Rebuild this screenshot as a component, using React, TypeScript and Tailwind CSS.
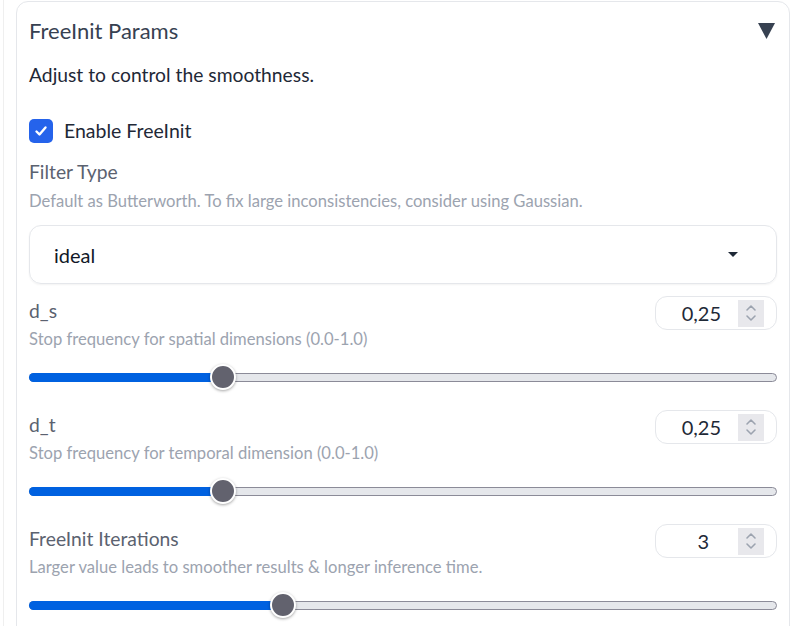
import React from 'react';

const font = { fontFamily: 'Lato, "Noto Sans", sans-serif' };

const NumberBox: React.FC<{ value: string; textPad?: string }> = ({ value, textPad = 'pr-[17px]' }) => (
    <div className="flex items-center h-[34px] w-[122px] rounded-xl border border-[#e5e7eb] bg-white pr-[12px]">
        <span className={`flex-1 text-right text-[20px] text-[#1f2937] ${textPad}`}>{value}</span>
        <div className="flex flex-col items-center justify-center w-[26px] h-[27px] bg-[#e8e8ec]">
            <svg width="12" height="20" viewBox="0 0 12 20" fill="none" stroke="#9ca3af" strokeWidth="1.6" strokeLinecap="round" strokeLinejoin="round">
                <path d="M2 7 L6 3 L10 7" />
                <path d="M2 13 L6 17 L10 13" />
            </svg>
        </div>
    </div>
);

const Slider: React.FC<{ pct: number }> = ({ pct }) => {
    // thumb 26px wide, browser-like positioning
    const left = 13 + pct * (749 - 26);
    return (
        <div className="relative h-[28px] flex items-center">
            <div className="w-full h-[9px] rounded-full border border-[#8b8b98] bg-[#e5e7eb]" />
            <div className="absolute left-0 h-[9px] rounded-full bg-[#0061e0]" style={{ width: left }} />
            <div
                className="absolute top-[1px] w-[26px] h-[26px] rounded-full bg-[#62626e] border-2 border-white shadow-[0_1px_3px_rgba(0,0,0,0.35)]"
                style={{ left: left - 13 }}
            />
        </div>
    );
};

const SliderBlock: React.FC<{ label: string; info: string; value: string; pct: number; textPad?: string }> = ({ label, info, value, pct, textPad }) => (
    <div>
        <div className="flex items-start justify-between h-[34px]">
            <span className="mt-[3px] text-[19.3px] leading-6 text-[#5b6270]">{label}</span>
            <NumberBox value={value} textPad={textPad} />
        </div>
        <p className="-mt-[2px] h-[22px] text-[16.6px] leading-[22px] text-[#9ca3af]">{info}</p>
        <div className="mt-[13px]">
            <Slider pct={pct} />
        </div>
    </div>
);

const App: React.FC = () => {
    return (
        <div className="w-[800px] h-[626px] overflow-hidden bg-white" style={font}>
            <div className="ml-[3px] h-full border-l border-[#efefef] pl-[12px] pr-[10px] pt-[1px]">
                <div className="h-[700px] rounded-xl border border-[#e5e7eb] pl-[12px] pr-3">
                    {/* accordion header */}
                    <div className="flex items-center justify-between h-[56px] pt-[1px]">
                        <span className="text-[22px] text-[#374151]">FreeInit Params</span>
                        <svg width="17" height="16" viewBox="0 0 17 16" className="mr-[2px]">
                            <path d="M0 0 H17 L8.5 16 Z" fill="#374151" />
                        </svg>
                    </div>

                    <div className="flex items-center h-[34px]">
                        <p className="text-[19.3px] text-[#1f2937]">Adjust to control the smoothness.</p>
                    </div>

                    <label className="mt-[22px] flex items-center h-[34px] gap-[11px]">
                        <span className="flex items-center justify-center w-[24px] h-[24px] rounded-[5px] bg-[#2563eb]">
                            <svg width="14" height="14" viewBox="0 0 14 14" fill="none" stroke="white" strokeWidth="2.4" strokeLinecap="round" strokeLinejoin="round">
                                <path d="M2.5 7.5 L5.5 10.5 L11.5 3.5" />
                            </svg>
                        </span>
                        <span className="text-[19.5px] text-[#1f2937]">Enable FreeInit</span>
                    </label>

                    <div className="mt-[12px] h-[24px] flex items-center text-[19.3px] text-[#5b6270]">Filter Type</div>
                    <p className="mt-[6px] h-[22px] text-[16.6px] leading-[22px] text-[#9ca3af]">
                        Default as Butterworth. To fix large inconsistencies, consider using Gaussian.
                    </p>

                    <div className="mt-[13px] h-[59px] flex items-center justify-between rounded-xl border border-[#e5e7eb] shadow-[0_1px_2px_rgba(0,0,0,0.05)] pl-[24px] pr-[38px]">
                        <span className="text-[20px] text-[#111827]">ideal</span>
                        <svg width="10" height="5" viewBox="0 0 10 5">
                            <path d="M0 0 H10 L5 5 Z" fill="#1f2937" />
                        </svg>
                    </div>

                    <div className="mt-[12px]">
                        <SliderBlock label="d_s" info="Stop frequency for spatial dimensions (0.0-1.0)" value="0,25" pct={0.25} />
                    </div>
                    <div className="mt-[19px]">
                        <SliderBlock label="d_t" info="Stop frequency for temporal dimension (0.0-1.0)" value="0,25" pct={0.25} />
                    </div>
                    <div className="mt-[19px]">
                        <SliderBlock label="FreeInit Iterations" info="Larger value leads to smoother results & longer inference time." value="3" pct={2 / 6} textPad="pr-[29px]" />
                    </div>
                </div>
            </div>
        </div>
    );
};

export default App;
